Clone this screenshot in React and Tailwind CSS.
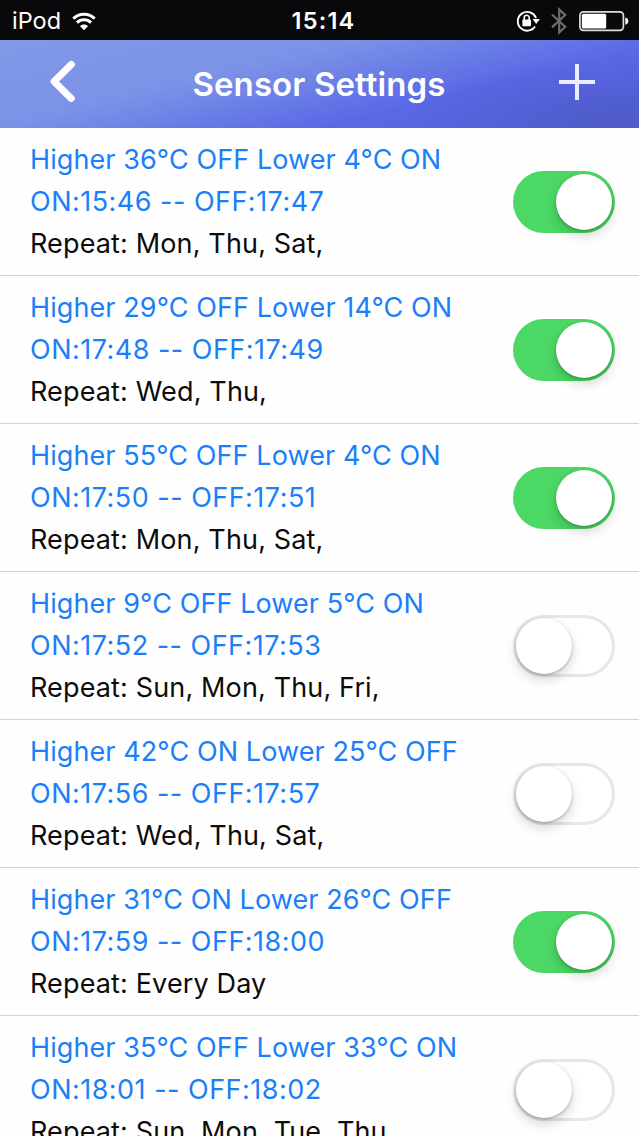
const rows = [
  { rule: "Higher 36°C OFF Lower 4°C ON", time: "ON:15:46 -- OFF:17:47", repeat: "Repeat: Mon, Thu, Sat,", on: true },
  { rule: "Higher 29°C OFF Lower 14°C ON", time: "ON:17:48 -- OFF:17:49", repeat: "Repeat: Wed, Thu,", on: true },
  { rule: "Higher 55°C OFF Lower 4°C ON", time: "ON:17:50 -- OFF:17:51", repeat: "Repeat: Mon, Thu, Sat,", on: true },
  { rule: "Higher 9°C OFF Lower 5°C ON", time: "ON:17:52 -- OFF:17:53", repeat: "Repeat: Sun, Mon, Thu, Fri,", on: false },
  { rule: "Higher 42°C ON Lower 25°C OFF", time: "ON:17:56 -- OFF:17:57", repeat: "Repeat: Wed, Thu, Sat,", on: false },
  { rule: "Higher 31°C ON Lower 26°C OFF", time: "ON:17:59 -- OFF:18:00", repeat: "Repeat: Every Day", on: true },
  { rule: "Higher 35°C OFF Lower 33°C ON", time: "ON:18:01 -- OFF:18:02", repeat: "Repeat: Sun, Mon, Tue, Thu,", on: false },
];

function StatusBar() {
  return (
    <div className="grid h-10 shrink-0 grid-cols-3 items-center bg-[#09080a] text-white">
      <div className="flex items-center gap-[11px] pl-3">
        <span className="text-[23.5px] leading-[42px]">iPod</span>
        <svg className="h-[19px] w-6" viewBox="0 0 24 19" fill="none" stroke="#fff" strokeWidth="3">
          <path d="M1.3 6.6C7.2.8 16.8.8 22.7 6.6" />
          <path d="M5 10.7c3.9-3.8 10.1-3.8 14 0" />
          <path d="M12 18.2 7.9 14.1c2.2-2.2 6-2.2 8.2 0z" fill="#fff" stroke="none" />
        </svg>
      </div>
      <div className="pl-2 text-center text-[23.5px] font-semibold leading-[42px] tracking-[1.2px]">15:14</div>
      <div className="flex items-center justify-end pr-[10px]">
        <svg className="h-6 w-6" viewBox="0 0 24 24" fill="none" stroke="#fff" strokeWidth="1.9">
          <path d="M19 17.5A9.4 9.4 0 1 1 20 9" />
          <path d="M16.6 10h7.2l-3.6 5z" fill="#fff" stroke="none" />
          <rect x="6.4" y="10.6" width="8.6" height="6.6" rx="0.8" fill="#fff" stroke="none" />
          <path d="M8.2 11.1V8.8a2.5 2.5 0 0 1 5 0v2.3" strokeWidth="1.6" />
        </svg>
        <svg className="ml-[11px] h-7 w-4" viewBox="0 0 16 28" fill="none" stroke="#6d6c6f" strokeWidth="2.2">
          <path d="M1 7.5 14.2 19.8 8.2 25.5V2.4l6 5.7L1 20.4" />
        </svg>
        <svg className="ml-3 h-[22px] w-[50px]" viewBox="0 0 50 22" fill="none">
          <rect x="0.9" y="1.9" width="43.5" height="18.4" rx="3.5" stroke="#dedde0" strokeWidth="1.7" />
          <rect x="2.8" y="3.8" width="24.4" height="14.6" rx="1.5" fill="#fff" />
          <path d="M46.3 7.4c4 .6 4 6.8 0 7.4z" fill="#fff" />
        </svg>
      </div>
    </div>
  );
}

function NavBar() {
  return (
    <header className="flex h-[88px] shrink-0 items-center justify-between bg-[radial-gradient(ellipse_240px_70px_at_100%_100%,#4f5cca_20%,#4f5cca00_100%),linear-gradient(166deg,#8299e8_0%,#7b92e7_36%,#5a68e6_68%,#5862e2_100%)] pl-[49px] pr-[44px] text-white">
      <button className="relative -top-[3px]" aria-label="Back">
        <svg className="h-[46px] w-[30px]" viewBox="0 0 30 46" fill="none" stroke="#fff" strokeWidth="7" strokeLinecap="round" strokeLinejoin="round">
          <path d="M22.3 6.4 5.1 23.4 22.3 40.4" />
        </svg>
      </button>
      <h1 className="text-[33px] font-semibold leading-[88px] tracking-[0.1px]">Sensor Settings</h1>
      <button className="relative -top-[2px]" aria-label="Add">
        <svg className="h-9 w-9" viewBox="0 0 36 36" stroke="#e9edff" strokeWidth="4">
          <path d="M18 0v36M0 18h36" />
        </svg>
      </button>
    </header>
  );
}

function Toggle({ on }) {
  return on ? (
    <span className="flex h-[62px] w-[102px] items-center justify-end rounded-full bg-[#4bd864] pr-[3px]">
      <span className="size-[56px] rounded-full bg-white shadow-[0_6px_12px_rgba(0,0,0,0.16),0_1px_3px_rgba(0,0,0,0.25)]" />
    </span>
  ) : (
    <span className="flex h-[62px] w-[102px] items-center justify-start rounded-full border-[3px] border-[#e7e6e8] bg-white">
      <span className="size-[56px] rounded-full bg-white shadow-[0_6px_12px_rgba(0,0,0,0.16),0_1px_3px_rgba(0,0,0,0.25)]" />
    </span>
  );
}

export default function App() {
  return (
    <div className="flex h-[1136px] w-[639px] flex-col overflow-hidden bg-[#fefefe] font-['Inter',sans-serif]">
      <StatusBar />
      <NavBar />
      <ul className="flex flex-col">
        {rows.map((row) => (
          <li key={row.time} className="flex h-[148px] shrink-0 items-center justify-between border-b-[1.5px] border-[#d3d1d8] pl-[30px] pr-6">
            <div className="whitespace-nowrap pt-px text-[27px] leading-[42px] [font-feature-settings:'calt'_0]">
              <p className="tracking-[0.09px] text-[#1b7ff8]">{row.rule}</p>
              <p className="tracking-[0.48px] text-[#1b7ff8]">{row.time}</p>
              <p className="tracking-[0.14px] text-[#0c0c0c]">{row.repeat}</p>
            </div>
            <Toggle on={row.on} />
          </li>
        ))}
      </ul>
    </div>
  );
}
